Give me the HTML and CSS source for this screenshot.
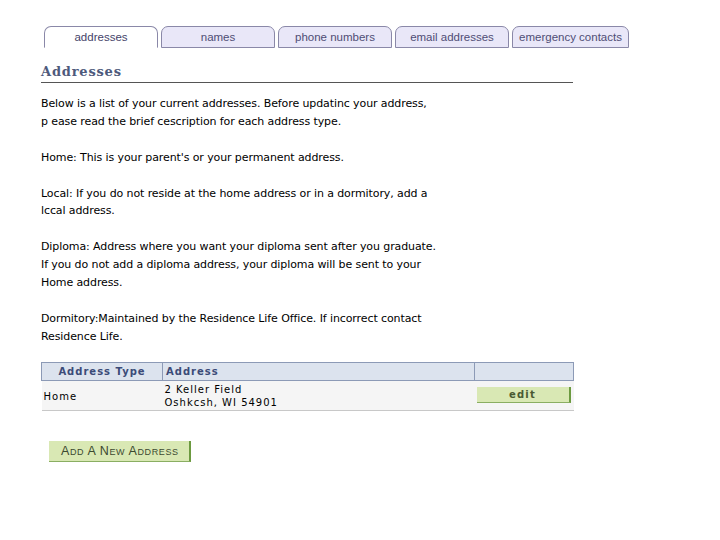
FILE: index.html
```html
<!DOCTYPE html>
<html lang="en">
<head>
    <meta charset="UTF-8">
    <title>Addresses</title>
    <link rel="stylesheet" href="styles.css">
</head>
<body>
    <div class="tabs">
        <div class="tab active">addresses</div>
        <div class="tab">names</div>
        <div class="tab">phone numbers</div>
        <div class="tab">email addresses</div>
        <div class="tab wide">emergency contacts</div>
    </div>

    <div class="content">
        <h1 class="page-title">Addresses</h1>

        <div class="intro">
            Below is a list of your current addresses. Before updatinc your address,<br>
            p ease read the brief cescription for each address type.<br><br>
            Home: This is your parent's or your permanent address.<br><br>
            Local: If you do not reside at the home address or in a dormitory, add a<br>
            lccal address.<br><br>
            Diploma: Address where you want your diploma sent after you graduate.<br>
            If you do not add a diploma address, your diploma will be sent to your<br>
            Home address.<br><br>
            Dormitory:Maintained by the Residence Life Office. If incorrect contact<br>
            Residence Life.
        </div>

        <table class="addr-table">
            <tr>
                <th class="col-type">Address Type</th>
                <th class="col-addr">Address</th>
                <th class="col-btn"></th>
            </tr>
            <tr>
                <td>Home</td>
                <td>2 Keller Field<br>Oshkcsh, WI 54901</td>
                <td class="cell-btn"><span class="btn edit-btn">edit</span></td>
            </tr>
        </table>

        <div class="add-row">
            <span class="btn add-btn">Add a New Address</span>
        </div>
    </div>
</body>
</html>
```

FILE: styles.css
```css
body {
    margin: 0;
    padding: 0;
    background: #ffffff;
    font-family: 'DejaVu Sans', Verdana, sans-serif;
    color: #000000;
}

.tabs {
    display: flex;
    gap: 3px;
    padding: 26px 0 0 44px;
}

.tab {
    width: 112px;
    height: 20px;
    line-height: 20px;
    border: 1px solid #8a88a8;
    border-radius: 7px 7px 0 0;
    background: #e9e7f8;
    color: #4f4d75;
    font-family: 'Liberation Sans', Arial, sans-serif;
    font-size: 11.5px;
    text-align: center;
}

.tab.active {
    background: #ffffff;
    border-bottom-color: #ffffff;
    color: #45436a;
}

.tab.wide {
    width: 115px;
}

.content {
    padding-left: 41px;
    width: 532px;
}

.page-title {
    margin: 16px 0 0 0;
    padding-bottom: 3px;
    border-bottom: 1px solid #555555;
    font-family: 'DejaVu Serif', Georgia, serif;
    font-size: 13px;
    letter-spacing: 0.8px;
    color: #4e5a7c;
}

.intro {
    margin-top: 12px;
    font-size: 11px;
    line-height: 17.9px;
    letter-spacing: -0.1px;
}

.addr-table {
    width: 533px;
    margin-top: 16px;
    border-collapse: collapse;
    font-size: 10px;
    letter-spacing: 1px;
}

.addr-table th {
    height: 17px;
    padding: 0 3px;
    background: #dce3ee;
    border: 1px solid #8c9ab6;
    color: #3b4b78;
    font-size: 10px;
    text-align: left;
}

.addr-table th.col-type {
    width: 114px;
    text-align: center;
}

.addr-table th.col-btn {
    width: 92px;
}

.addr-table td {
    height: 27px;
    padding: 2px 2px 0 2px;
    background: #f5f5f5;
    border-bottom: 1px solid #c8c8c8;
    line-height: 13px;
}

.addr-table td.cell-btn {
    padding-top: 1px;
    padding-bottom: 1px;
}

.btn {
    display: inline-block;
    background: #d9e8b4;
    border-right: 2px solid #6c9a40;
    border-bottom: 1px solid #8aae62;
    font-family: 'Liberation Sans', Arial, sans-serif;
    color: #3c4a30;
}

.edit-btn {
    width: 92px;
    height: 15px;
    line-height: 15px;
    text-align: center;
    font-family: 'DejaVu Sans', Verdana, sans-serif;
    font-weight: bold;
    font-size: 10px;
    letter-spacing: 1.2px;
    color: #4a5a32;
}

.add-row {
    margin-top: 29px;
    padding-left: 8px;
}

.add-btn {
    padding: 0 10px 0 12px;
    height: 20px;
    line-height: 20px;
    font-size: 12.5px;
    font-variant: small-caps;
    text-transform: capitalize;
    letter-spacing: 0.6px;
}
```
